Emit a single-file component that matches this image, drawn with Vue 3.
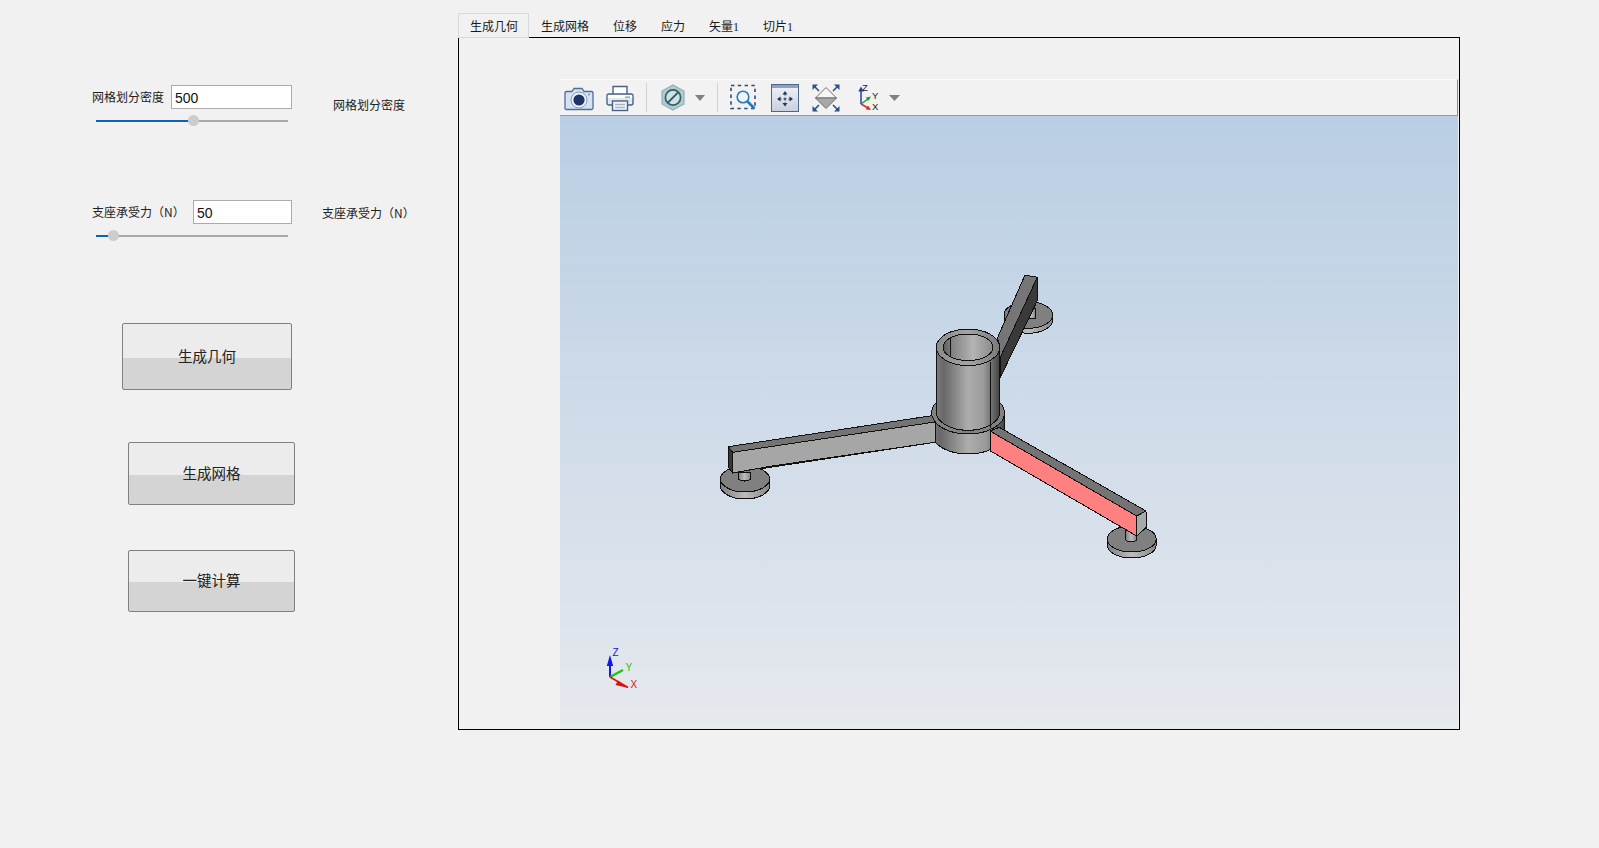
<script setup>
const tabs = ['生成几何', '生成网格', '位移', '应力', '矢量1', '切片1'];
const buttons = [
  { label: '生成几何', cls: 'btn-geo' },
  { label: '生成网格', cls: 'btn-mesh' },
  { label: '一键计算', cls: 'btn-calc' }
];
const meshPercent = 50.5;
const forcePercent = 9;
</script>

<template>
  <div class="page">
    <aside class="side">
      <div class="field field-mesh">
        <label class="lbl lbl-mesh">网格划分密度</label>
        <input class="num num-mesh" value="500" />
        <span class="echo echo-mesh">网格划分密度</span>
      </div>
      <div class="slider">
        <div class="fill" :style="{ width: meshPercent + '%' }"></div>
        <div class="knob" :style="{ left: meshPercent + '%' }"></div>
      </div>

      <div class="field field-force">
        <label class="lbl lbl-force">支座承受力（N）</label>
        <input class="num num-force" value="50" />
        <span class="echo echo-force">支座承受力（N）</span>
      </div>
      <div class="slider">
        <div class="fill" :style="{ width: forcePercent + '%' }"></div>
        <div class="knob" :style="{ left: forcePercent + '%' }"></div>
      </div>

      <button v-for="b in buttons" :key="b.label" class="act" :class="b.cls">{{ b.label }}</button>
    </aside>

    <main class="main">
      <div class="tabs">
        <div v-for="(t, i) in tabs" :key="t" class="tab" :class="{ active: i === 0 }">{{ t }}</div>
      </div>
      <div class="pane">
        <div class="viewer">
          <div class="toolbar">
            <!-- camera -->
            <svg class="ic i-camera" width="30" height="26" viewBox="0 0 30 26">
              <path d="M2.5 6.5H8L10 3.5H18L20 6.5H27.5Q29 6.5 29 8V23Q29 24.5 27.5 24.5H2.5Q1 24.5 1 23V8Q1 6.5 2.5 6.5Z" fill="#d5e2f1" stroke="#4f6d97" stroke-width="1.3"/>
              <circle cx="15" cy="15" r="8" fill="#eef3f9" stroke="#7f9cc0"/>
              <circle cx="15" cy="15" r="5.6" fill="#1d3568"/>
              <circle cx="25" cy="9.5" r="1" fill="#6f8fb8"/>
            </svg>
            <!-- printer -->
            <svg class="ic i-printer" width="28" height="28" viewBox="0 0 28 28">
              <path d="M7 10V2.5H21V10" fill="#fff" stroke="#47628a" stroke-width="1.4"/>
              <rect x="1" y="10" width="26" height="11" rx="2" fill="#e3e8ef" stroke="#47628a" stroke-width="1.4"/>
              <rect x="1.8" y="11" width="24.4" height="3" fill="#fff"/>
              <rect x="19" y="12.5" width="5" height="1.4" fill="#8ea0b8"/>
              <rect x="6.5" y="17" width="15" height="9.5" fill="#f4f6f9" stroke="#47628a" stroke-width="1.4"/>
              <path d="M9 20.5H19M9 23.5H19" stroke="#a8b4c4" stroke-width="1.4"/>
            </svg>
            <div class="sep sep-a"></div>
            <!-- hide / no-display hexagon -->
            <svg class="ic i-hex" width="24" height="27" viewBox="0 0 24 27">
              <path d="M12 1L23 7V20L12 26L1 20V7Z" fill="#b4cacc" stroke="#93b0b4" stroke-width="1.2"/>
              <circle cx="12" cy="13.5" r="7.6" fill="#d6e0e1" stroke="#2a6270" stroke-width="1.7"/>
              <path d="M7 18.5L17 8.5" stroke="#2a6270" stroke-width="1.8"/>
            </svg>
            <svg class="ic i-drop" width="10" height="6" viewBox="0 0 10 6"><path d="M0 0H10L5 6Z" fill="#808080"/></svg>
            <div class="sep sep-b"></div>
            <!-- zoom box -->
            <svg class="ic i-zoom" width="27" height="27" viewBox="0 0 27 27">
              <rect x="1" y="1.5" width="24" height="23" fill="none" stroke="#2d4a7c" stroke-width="1.6" stroke-dasharray="3.4 3.4"/>
              <circle cx="13" cy="13" r="5.8" fill="#eef4fa" stroke="#2b78b8" stroke-width="1.6"/>
              <path d="M17.5 17.5L24.5 24.5" stroke="#1f7ac2" stroke-width="2.6"/>
            </svg>
            <!-- fit all -->
            <svg class="ic i-fit" width="28" height="28" viewBox="0 0 28 28">
              <defs>
                <linearGradient id="fitBg" x1="0" y1="0" x2="0" y2="1">
                  <stop offset="0" stop-color="#f2f4f7"/>
                  <stop offset="1" stop-color="#c8d0dc"/>
                </linearGradient>
              </defs>
              <rect x="0.5" y="0.5" width="27" height="27" fill="url(#fitBg)" stroke="#50658a"/>
              <rect x="1" y="1" width="26" height="3" fill="#8fa1bf"/>
              <path d="M14 8.5V21M7.5 15H20.5" stroke="#24395f" stroke-width="1.1" stroke-dasharray="3 2"/>
              <path d="M14 7L11.5 10.5H16.5ZM14 22.5L11.5 19H16.5ZM6 15L9.5 12.5V17.5ZM22 15L18.5 12.5V17.5Z" fill="#24395f"/>
            </svg>
            <!-- fit view diamond -->
            <svg class="ic i-dia" width="28" height="28" viewBox="0 0 28 28">
              <path d="M14 3.5L24.5 14H3.5Z" fill="#f7f7f7" stroke="#6e6e6e"/>
              <path d="M3.5 14H24.5L14 24.5Z" fill="#a8a8a8" stroke="#6e6e6e"/>
              <path d="M2.5 2.5L7 7M25.5 2.5L21 7M2.5 25.5L7 21M25.5 25.5L21 21" stroke="#2f4f85" stroke-width="1.6"/>
              <path d="M0.5 0.5H6L0.5 6ZM27.5 0.5H22L27.5 6ZM0.5 27.5H6L0.5 22ZM27.5 27.5H22L27.5 22Z" fill="#2f4f85"/>
            </svg>
            <!-- axes view -->
            <svg class="ic i-axes" width="24" height="29" viewBox="0 0 24 29">
              <path d="M4 21V7" stroke="#1f3fb0" stroke-width="1.5"/>
              <path d="M4 3.5L1.3 8.5H6.7Z" fill="#1f3fb0"/>
              <path d="M4 21L11 16" stroke="#1c9a3c" stroke-width="1.5"/>
              <path d="M14 13.5L8.8 14.4L11.3 18Z" fill="#1c9a3c"/>
              <path d="M4 21L11 25" stroke="#d92a2a" stroke-width="1.5"/>
              <path d="M14 27L8.8 26.4L11 22.4Z" fill="#d92a2a"/>
              <text x="5" y="7.5" class="ax">Z</text>
              <text x="15" y="16" class="ax">Y</text>
              <text x="15" y="27" class="ax">X</text>
            </svg>
            <svg class="ic i-drop2" width="11" height="6" viewBox="0 0 11 6"><path d="M0 0H11L5.5 6Z" fill="#808080"/></svg>
          </div>

          <div class="scene">
            <svg class="model" viewBox="560 116 898 613" width="898" height="613">
              <defs>
                <linearGradient id="cyl" x1="0" y1="0" x2="1" y2="0">
                  <stop offset="0" stop-color="#7a7a7a"/>
                  <stop offset="0.12" stop-color="#686868"/>
                  <stop offset="0.5" stop-color="#adadad"/>
                  <stop offset="0.75" stop-color="#9a9a9a"/>
                  <stop offset="0.93" stop-color="#5c5c5c"/>
                  <stop offset="1" stop-color="#404040"/>
                </linearGradient>
                <linearGradient id="ring" x1="0" y1="0" x2="1" y2="0">
                  <stop offset="0" stop-color="#8a8a8a"/>
                  <stop offset="0.5" stop-color="#a4a4a4"/>
                  <stop offset="1" stop-color="#7a7a7a"/>
                </linearGradient>
                <linearGradient id="bore" x1="0" y1="0" x2="1" y2="0">
                  <stop offset="0" stop-color="#585858"/>
                  <stop offset="0.15" stop-color="#7e7e7e"/>
                  <stop offset="0.6" stop-color="#b4b4b4"/>
                  <stop offset="1" stop-color="#8a8a8a"/>
                </linearGradient>
                <linearGradient id="foot" x1="0" y1="0" x2="1" y2="0">
                  <stop offset="0" stop-color="#7e7e7e"/>
                  <stop offset="0.5" stop-color="#bdbdbd"/>
                  <stop offset="1" stop-color="#868686"/>
                </linearGradient>
              </defs>

              <g stroke="#111" stroke-width="1" shape-rendering="crispEdges">
                <!-- back foot -->
                <path d="M1004 315V320A24.3 13.3 0 0 0 1052.6 320V315Z" fill="url(#foot)"/>
                <ellipse cx="1028.3" cy="315" rx="24.3" ry="13.3" fill="#808080"/>
                <rect x="1028" y="308" width="7" height="10" fill="url(#foot)"/>
                <!-- back arm -->
                <polygon points="1025,275 1037.3,277.3 1000,358 997.7,337.3" fill="#767676"/>
                <polygon points="1037.3,277.3 1037.3,300.7 1000,378 1000,358" fill="#3a3a3a"/>

                <!-- base disc -->
                <path d="M931.5 413V433A36.5 21 0 0 0 1004.5 433V413Z" fill="url(#cyl)"/>
                <ellipse cx="968" cy="413" rx="36.5" ry="21" fill="#828282"/>

                <!-- tube -->
                <path d="M936.3 347V412A31.7 18.3 0 0 0 999.7 412V347Z" fill="url(#cyl)"/>
                <path d="M990.7 362V428" fill="none"/>
                <ellipse cx="968" cy="347.3" rx="31.7" ry="18.3" fill="url(#ring)"/>
                <ellipse cx="968" cy="347.3" rx="25" ry="13.3" fill="url(#bore)"/>
                <path d="M950 338V356" fill="none"/>

                <!-- left arm -->
                <polygon points="728.3,446.7 931.7,415.7 935,422 732.7,452.3" fill="#747474"/>
                <polygon points="732.7,452.3 935,422 935,442.3 732.7,473" fill="#a6a6a6"/>

                <!-- left foot -->
                <path d="M720.5 479V486A24.5 13 0 0 0 769.5 486V479Z" fill="url(#foot)"/>
                <ellipse cx="745" cy="479" rx="24.5" ry="13" fill="#808080"/>
                <path d="M738.3 472V478A6.2 3 0 0 0 750.7 478V472Z" fill="url(#foot)"/>
                <polygon points="728.3,446.7 732.7,452.3 732.7,473 729,468.3" fill="#383838"/>
                <polygon points="732.7,452.3 935,422 935,442.3 772,466 732.7,473" fill="#a6a6a6"/>

                <!-- right foot -->
                <path d="M1107.2 539V545A24.5 13 0 0 0 1156.2 545V539Z" fill="url(#foot)"/>
                <ellipse cx="1131.7" cy="539" rx="24.5" ry="13" fill="#808080"/>
                <path d="M1125.7 530V539A5.5 3 0 0 0 1136.7 539V530Z" fill="url(#foot)"/>

                <!-- right arm -->
                <polygon points="990,431 999.3,427.3 1146,511 1136.7,516" fill="#747474"/>
                <polygon points="990,431 1136.7,516 1136.7,536 990,450.7" fill="#ff8080"/>
                <polygon points="1136.7,516 1146,511 1146.7,527 1136.7,536" fill="#a8a8a8"/>
              </g>

              <!-- triad -->
              <g>
                <path d="M610 677V662" stroke="#1414f0" stroke-width="2"/>
                <path d="M610 655L606.8 666H613.2Z" fill="#1414f0"/>
                <path d="M610 677L623 670" stroke="#14c814" stroke-width="2.4"/>
                <path d="M610 677L628 687.5" stroke="#e01010" stroke-width="1.6"/>
                <path d="M628.5 688L618 680.5L615.5 685Z" fill="#e01010"/>
                <text x="612.5" y="656" class="tri" fill="#1414f0">Z</text>
                <text x="625.5" y="671" class="tri" fill="#14c814">Y</text>
                <text x="630.5" y="688" class="tri" fill="#e01010">X</text>
              </g>
            </svg>
          </div>
        </div>
      </div>
    </main>
  </div>
</template>

<style>
html, body { margin: 0; background: #f1f1f1; }
</style>

<style scoped>
.page {
  display: flex;
  width: 1599px;
  height: 848px;
  overflow: hidden;
  background: #f1f1f1;
  font-family: "Noto Sans CJK SC", "Liberation Sans", sans-serif;
  font-size: 12px;
  color: #222;
}

.side {
  width: 366px;
  padding: 85px 0 0 92px;
  display: flex;
  flex-direction: column;
  align-items: flex-start;
  flex: none;
}

.field { display: flex; align-items: flex-start; height: 24px; }
.field-force { margin-top: 74px; }
.lbl, .echo { line-height: 16px; white-space: nowrap; }
.lbl { margin-top: 4px; }
.lbl-mesh { width: 79px; }
.lbl-force { width: 101px; }
.echo-mesh { margin: 12px 0 0 41px; }
.echo-force { margin: 5px 0 0 30px; }

.num {
  box-sizing: border-box;
  height: 24px;
  padding: 2px 3px 0;
  border: 1px solid #ababab;
  background: #fff;
  font: 14px "Liberation Sans", sans-serif;
  color: #111;
  outline: none;
}
.num-mesh { width: 121px; }
.num-force { width: 99px; }

.slider {
  position: relative;
  width: 192px;
  height: 2px;
  margin: 11px 0 4px 4px;
  background: #a9a9a9;
}
.fill { height: 2px; background: #0b62b8; }
.knob {
  position: absolute;
  top: -5px;
  width: 11px;
  height: 11px;
  margin-left: -5px;
  border-radius: 50%;
  background: #cdcdcd;
}

.act {
  box-sizing: border-box;
  display: block;
  padding: 0 0 3px;
  border: 1px solid #808080;
  border-radius: 2px;
  background: linear-gradient(#ececec 0, #ececec 52%, #d4d4d4 52%, #d4d4d4 100%);
  font-family: "Noto Sans CJK SC", sans-serif;
  font-size: 14.5px;
  color: #222;
}
.btn-geo { width: 170px; height: 67px; margin: 82px 0 0 30px; }
.btn-mesh { width: 167px; height: 63px; margin: 52px 0 0 36px; }
.btn-calc { width: 167px; height: 62px; margin: 45px 0 0 36px; }

.main { margin: 13px 0 0 0; width: 1002px; flex: none; }

.tabs { display: flex; height: 25px; margin-bottom: -1px; position: relative; z-index: 1; }
.tab {
  box-sizing: border-box;
  height: 25px;
  padding: 5px 12px 0;
  line-height: 18px;
  white-space: nowrap;
  font-family: "Liberation Serif", "Noto Sans CJK SC", serif;
  color: #1a1a1a;
}
.tab.active {
  width: 71px;
  border: 1px solid #d9d9d9;
  padding: 4px 0 0 11px;
  background: #f1f1f1;
}

.pane {
  box-sizing: border-box;
  height: 693px;
  border: 1px solid #000;
  padding: 41px 1px 0 101px;
}
.viewer { height: 650px; display: flex; flex-direction: column; }

.toolbar {
  box-sizing: border-box;
  height: 37px;
  flex: none;
  display: flex;
  align-items: center;
  background: #f2f2f2;
  border-top: 1px solid #fbfbfb;
  border-bottom: 1px solid #9a9a9a;
  border-right: 1px solid #8a8a8a;
}
.ic { flex: none; display: block; }
.i-camera { margin-left: 4px; }
.i-printer { margin-left: 12px; }
.sep { width: 1px; height: 29px; background: #d2d2d2; flex: none; }
.sep-a { margin-left: 12px; }
.i-hex { margin-left: 14px; }
.i-drop { margin-left: 10px; }
.sep-b { margin-left: 12px; }
.i-zoom { margin-left: 12px; }
.i-fit { margin-left: 14px; }
.i-dia { margin-left: 13px; }
.i-axes { margin-left: 17px; }
.i-drop2 { margin-left: 8px; }
.ax { font: 9.5px "Liberation Sans", sans-serif; fill: #222; }

.scene {
  flex: 1;
  overflow: hidden;
  background: linear-gradient(#b9cee4, #e6e9ee);
}
.model { display: block; }
.tri { font: 10px "Liberation Sans", sans-serif; }
</style>
